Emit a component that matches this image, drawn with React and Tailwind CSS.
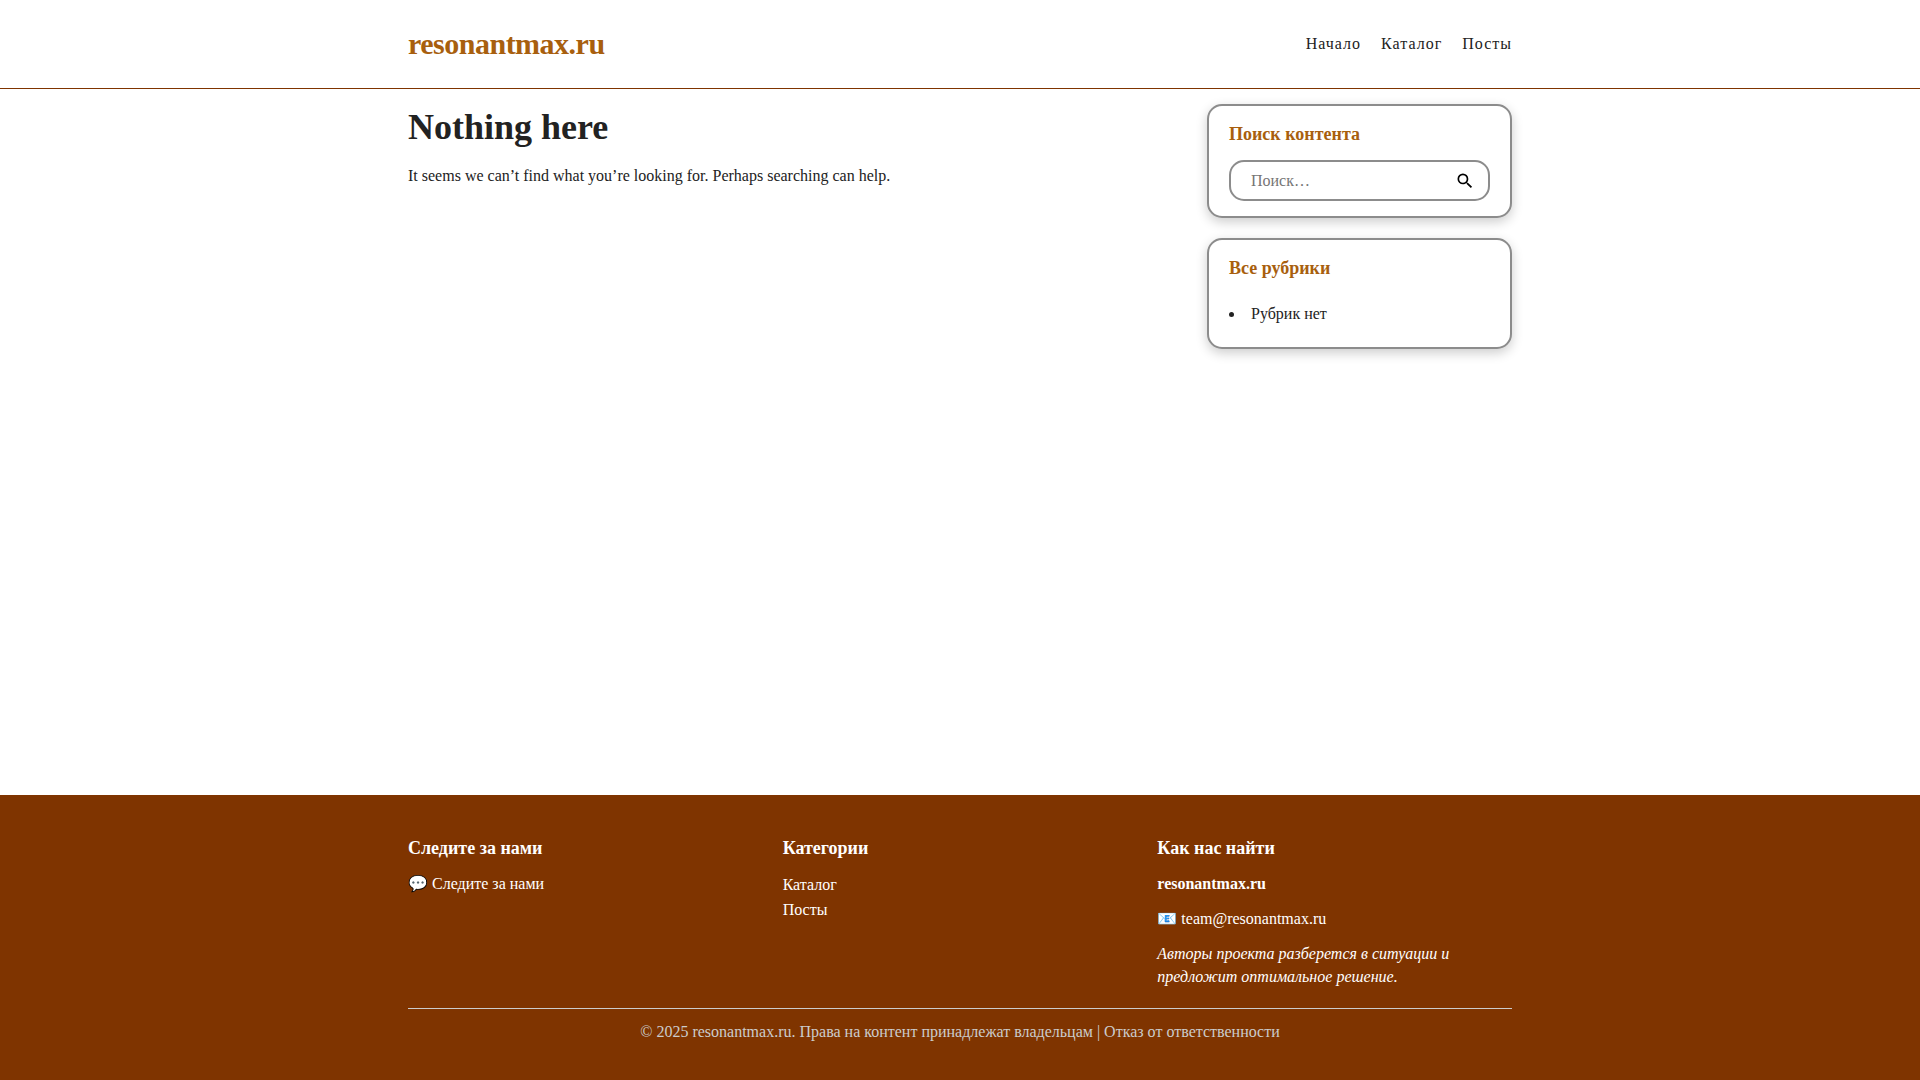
import React, { useState } from "react";

const navLinks = ["Начало", "Каталог", "Посты"];
const categories = ["Каталог", "Посты"];

const Header = () => (
  <header className="border-b border-[#7f3400] bg-white">
    <div className="mx-auto flex h-[88px] max-w-[1104px] items-center justify-between pb-0.5">
      <a
        href="#"
        className="text-[30px] font-bold tracking-[-0.5px] text-[#a85f0e]"
      >
        resonantmax.ru
      </a>
      <nav className="flex gap-5 tracking-[1px]">
        {navLinks.map((link) => (
          <a key={link} href="#">
            {link}
          </a>
        ))}
      </nav>
    </div>
  </header>
);

const Widget = ({ title, children }) => (
  <section className="rounded-[15px] border-2 border-[#8c8c8c] bg-white px-5 py-[15px] shadow-[0_4px_12px_rgba(0,0,0,0.2)]">
    <h2 className="text-lg leading-[26px] font-bold text-[#a85f0e]">{title}</h2>
    {children}
  </section>
);

const SearchForm = () => {
  const [query, setQuery] = useState("");

  return (
    <form
      className="mt-[13px] flex h-[41px] items-center rounded-[15px] border-2 border-[#8c8c8c] pr-[13px] pl-5"
      onSubmit={(e) => e.preventDefault()}
    >
      <input
        type="search"
        aria-label="Поиск"
        placeholder="Поиск…"
        value={query}
        onChange={(e) => setQuery(e.target.value)}
        className="min-w-0 flex-1 placeholder:text-[#757575] focus:outline-none"
      />
      <button type="submit" aria-label="Найти">
        <svg viewBox="0 0 24 24" className="size-5" fill="#000">
          <path d="M15.5 14h-.79l-.28-.27A6.471 6.471 0 0 0 16 9.5 6.5 6.5 0 1 0 9.5 16c1.61 0 3.09-.59 4.23-1.57l.27.28v.79l5 4.99L20.49 19l-4.99-5zm-6 0C7.01 14 5 11.99 5 9.5S7.01 5 9.5 5 14 7.01 14 9.5 11.99 14 9.5 14z" />
        </svg>
      </button>
    </form>
  );
};

const Footer = () => (
  <footer className="bg-[#7f3400] pt-[41px] pb-[37px] text-white">
    <div className="mx-auto max-w-[1104px]">
      <div className="grid grid-cols-3 gap-5">
        <div>
          <h3 className="text-lg leading-[24px] font-bold">Следите за нами</h3>
          <p className="mt-3">💬 Следите за нами</p>
        </div>
        <div>
          <h3 className="text-lg leading-[24px] font-bold">Категории</h3>
          <ul className="mt-3">
            {categories.map((name) => (
              <li key={name} className="leading-[25px]">
                <a href="#">{name}</a>
              </li>
            ))}
          </ul>
        </div>
        <div>
          <h3 className="text-lg leading-[24px] font-bold">Как нас найти</h3>
          <p className="mt-3 font-bold">resonantmax.ru</p>
          <p className="mt-3">
            📧 <a href="mailto:team@resonantmax.ru">team@resonantmax.ru</a>
          </p>
          <p className="mt-3 italic">
            Авторы проекта разберется в ситуации и предложит оптимальное
            решение.
          </p>
        </div>
      </div>
      <div className="mt-5 border-t border-[#ccc] pt-[11px] text-center text-[#ccc]">
        © 2025 resonantmax.ru. Права на контент принадлежат владельцам |{" "}
        <a href="#">Отказ от ответственности</a>
      </div>
    </div>
  </footer>
);

const App = () => (
  <div className="flex min-h-screen flex-col bg-white font-['Liberation_Serif',serif] text-base leading-[23px] text-[#222]">
    <Header />
    <div className="mx-auto flex w-full max-w-[1104px] flex-1 items-start gap-5 pt-[15px]">
      <main className="flex-1">
        <h1 className="text-4xl leading-[46px] font-bold">Nothing here</h1>
        <p className="mt-[14px]">
          It seems we can’t find what you’re looking for. Perhaps searching can
          help.
        </p>
      </main>
      <aside className="flex w-[305px] flex-col gap-5">
        <Widget title="Поиск контента">
          <SearchForm />
        </Widget>
        <Widget title="Все рубрики">
          <ul className="mt-5 mb-1.5 list-inside list-disc leading-[25px]">
            <li>Рубрик нет</li>
          </ul>
        </Widget>
      </aside>
    </div>
    <Footer />
  </div>
);

export default App;
